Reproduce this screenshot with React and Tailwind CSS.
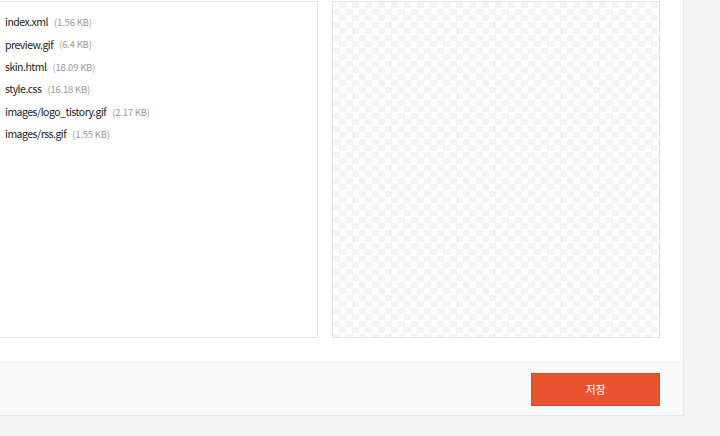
import React from 'react';

const files = [
  { name: 'index.xml', size: '1.56 KB' },
  { name: 'preview.gif', size: '6.4 KB' },
  { name: 'skin.html', size: '18.09 KB' },
  { name: 'style.css', size: '16.18 KB' },
  { name: 'images/logo_tistory.gif', size: '2.17 KB' },
  { name: 'images/rss.gif', size: '1.55 KB' },
];

export default function App() {
  return (
    <div className="h-[436px] w-[720px] bg-[#f3f4f6] overflow-hidden font-['Noto_Sans_CJK_KR','Noto_Sans',sans-serif]">
      <div className="w-[684px] bg-white border-r border-b border-[#e6e7ea]">
        <div className="flex gap-[14px] pt-px h-[362px]">
          <div className="w-[318px] h-[337px] border-y border-r border-[#e3e4ea] pt-[9px] pl-[5px]">
            <ul className="flex flex-col">
              {files.map((f) => (
                <li key={f.name} className="h-[22.4px] flex items-center text-[10.5px] tracking-[-0.5px] text-[#222]">
                  <span>{f.name}</span>
                  <span className="ml-[6px] text-[9.5px] tracking-[-0.2px] text-[#9a9a9a]">({f.size})</span>
                </li>
              ))}
            </ul>
          </div>
          <div className="w-[328px] h-[337px] border border-[#e3e4ea] bg-white bg-[conic-gradient(#f3f3f5_25%,#ffffff_0_50%,#f3f3f5_0_75%,#ffffff_0)] bg-[length:13px_13px]"></div>
        </div>
        <div className="h-[53px] bg-[#f8f9fa] border-t border-[#f0f1f3] flex items-center justify-end pr-[23px]">
          <button className="w-[129px] h-[33px] bg-[#e9532f] border border-[#d9482a] text-white text-[11px]">저장</button>
        </div>
      </div>
    </div>
  );
}
